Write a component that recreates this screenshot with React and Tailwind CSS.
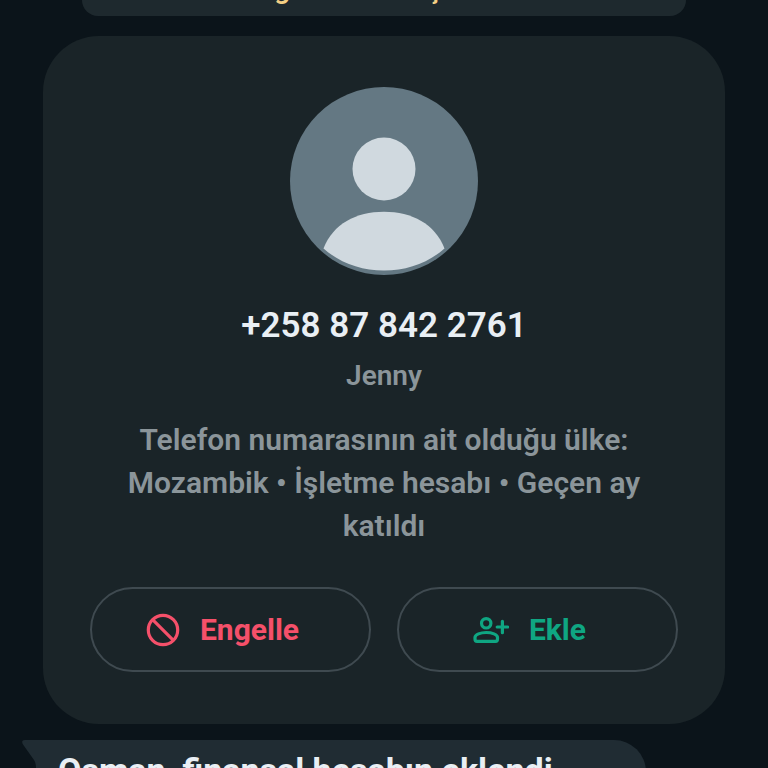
function AvatarPlaceholder() {
  return (
    <svg viewBox="0 0 188 188" className="size-47" aria-hidden="true">
      <circle cx="94" cy="94" r="94" fill="#647883" />
      <circle cx="94" cy="82" r="31.500" fill="#d0d9df" />
      <path
        d="M33.500 161.500C43 137 66 124.800 94 124.800S145 137 154.500 161.500C138 176 117 183.500 94 183.500S50 176 33.500 161.500Z"
        fill="#d0d9df"
      />
    </svg>
  );
}

function BlockIcon() {
  return (
    <svg
      viewBox="0 0 34 34"
      className="size-8.5"
      fill="none"
      stroke="currentColor"
      strokeWidth="3.2"
      aria-hidden="true"
    >
      <circle cx="17" cy="17" r="14.700" />
      <path d="M6.600 6.600 27.400 27.400" />
    </svg>
  );
}

function AddPersonIcon() {
  return (
    <svg
      viewBox="0 0 36 26"
      className="h-6.5 w-9"
      fill="none"
      stroke="currentColor"
      strokeWidth="3.2"
      strokeLinejoin="round"
      aria-hidden="true"
    >
      <circle cx="13.200" cy="6.300" r="4.700" />
      <path d="M2 22V20.500C2 17.500 7.500 15.500 13.200 15.500S24.500 17.500 24.500 20.500V22Q24.500 24.300 22.500 24.300H4Q2 24.300 2 22Z" />
      <path d="M29.400 4.300V15.700M24.200 10H34.600" strokeLinecap="round" />
    </svg>
  );
}

function ActionButton({ icon, label, color }) {
  return (
    <button
      type="button"
      className={`flex h-[85px] flex-1 items-center justify-center gap-5 rounded-full border-2 border-[#3f4a50] pr-4 text-[30px] font-bold ${color}`}
    >
      {icon}
      {label}
    </button>
  );
}

export default function App() {
  return (
    <main className="flex h-screen flex-col gap-5 overflow-hidden bg-[#0b141a] font-['Roboto',sans-serif]">
      {/* End of the security notice, scrolled up under the header */}
      <div className="mx-[82px] flex h-4 shrink-0 flex-col justify-end overflow-hidden rounded-b-2xl bg-[#1e292e] pb-[11px] text-center text-[28px] leading-8 font-semibold text-[#f3cf84]">
        <p>bilgi edinmek için bas.</p>
      </div>

      <section className="mx-[43px] flex shrink-0 flex-col items-center rounded-[56px] bg-[#1a2428] px-[47px] pt-[51px] pb-13">
        <AvatarPlaceholder />
        <h1 className="mt-[29px] text-[35px] leading-11 font-semibold text-[#e9eff4]">
          +258 87 842 2761
        </h1>
        <p className="mt-3 text-[28px] leading-8 font-semibold text-[#8b959a]">
          Jenny
        </p>
        <p className="mt-6.5 px-8 text-center text-[30px] leading-[43px] font-semibold text-[#8b959a]">
          Telefon numarasının ait olduğu ülke: Mozambik • İşletme hesabı • Geçen
          ay katıldı
        </p>
        <div className="mt-10 flex w-full gap-6.5">
          <ActionButton
            icon={<BlockIcon />}
            label="Engelle"
            color="text-[#f5506a]"
          />
          <ActionButton
            icon={<AddPersonIcon />}
            label="Ekle"
            color="text-[#0fa682]"
          />
        </div>
      </section>

      <article className="relative -mt-1 mr-[122px] ml-9 shrink-0 rounded-tr-4xl rounded-b-4xl bg-[#202c33] px-5.5 pt-2.5 pb-6">
        <svg
          viewBox="0 0 16 28"
          className="absolute top-0 -left-3.5 h-7 w-4"
          fill="#202c33"
          aria-hidden="true"
        >
          <path d="M16 0H3C0 0-.500 2 1 4.500L12 20Q14 23 14 28H16Z" />
        </svg>
        <p className="text-[34px] leading-10 font-bold whitespace-nowrap text-[#e9eff4]">
          Osman, finansal hesabın eklendi
        </p>
      </article>
    </main>
  );
}
